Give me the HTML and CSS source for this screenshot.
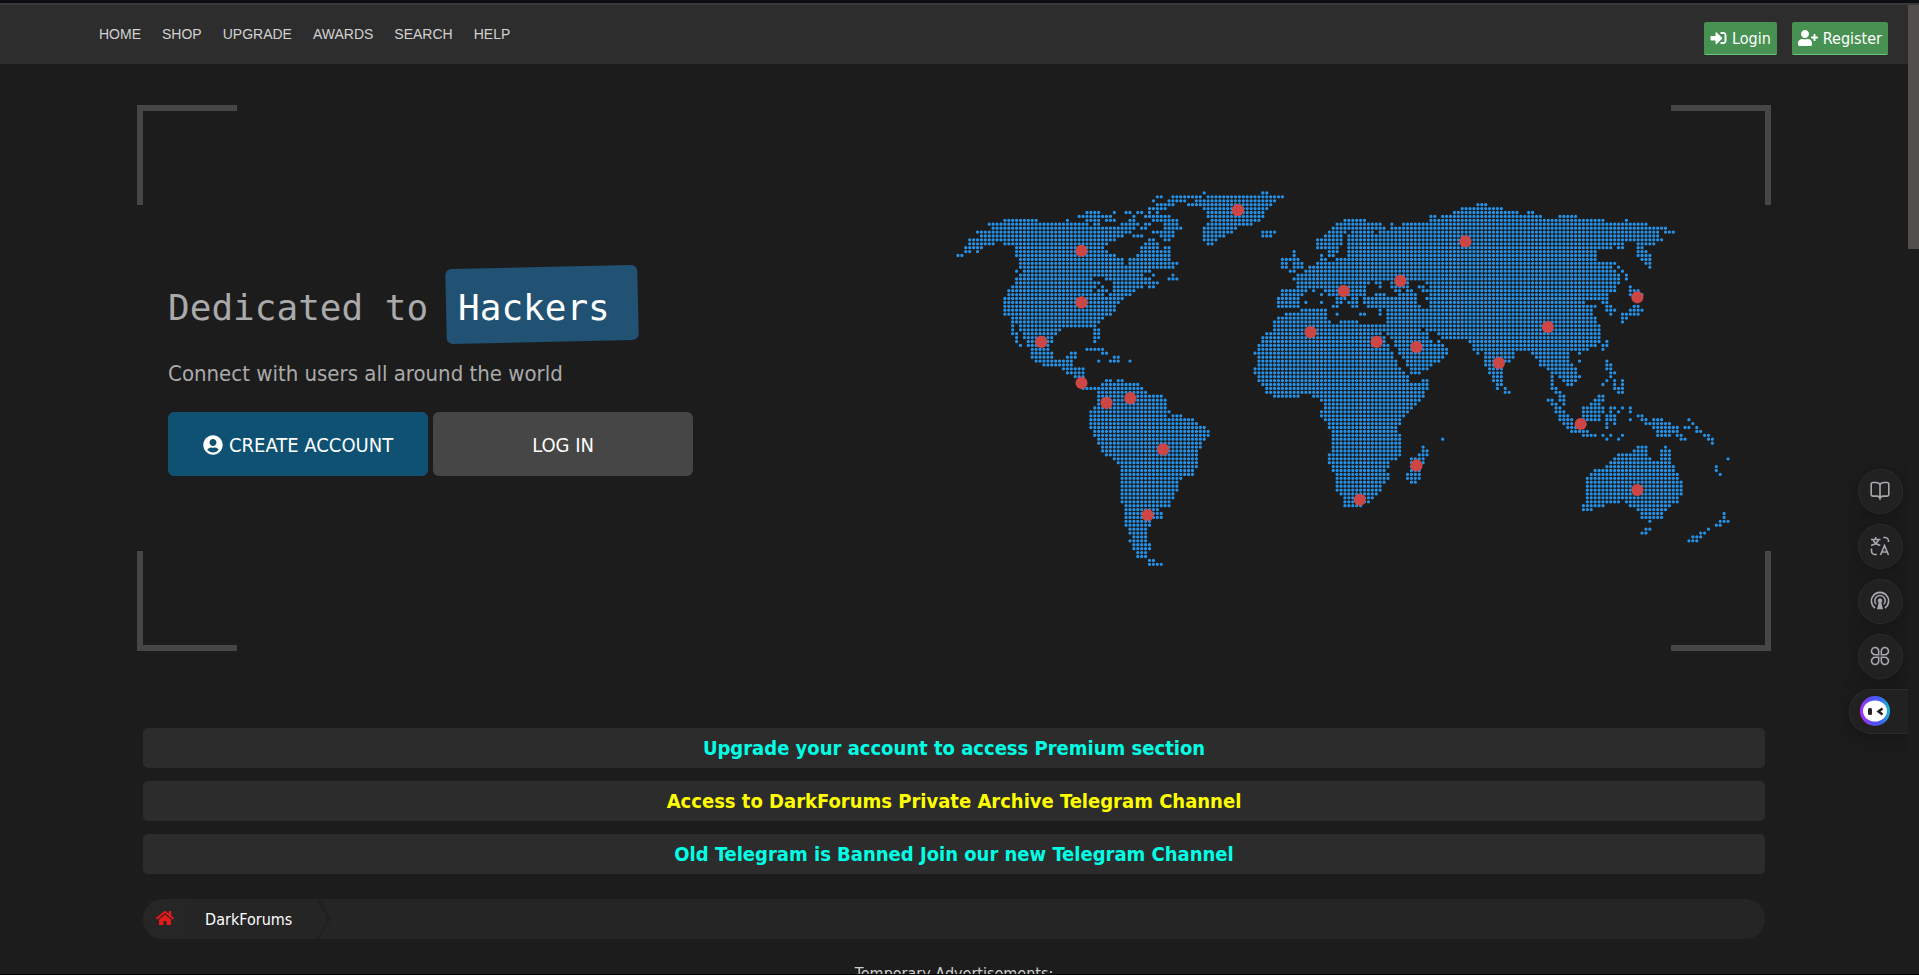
FILE: index.html
```html
<!DOCTYPE html>
<html lang="en">
<head>
<meta charset="utf-8">
<meta name="viewport" content="width=device-width, initial-scale=1">
<title>DarkForums</title>
<link rel="stylesheet" href="styles.css">
</head>
<body>
<div class="window-edge"></div>
<div class="viewport">
  <div class="page">
    <header class="topbar">
      <nav class="nav" aria-label="Main">
        <a href="#">HOME</a>
        <a href="#">SHOP</a>
        <a href="#">UPGRADE</a>
        <a href="#">AWARDS</a>
        <a href="#">SEARCH</a>
        <a href="#">HELP</a>
      </nav>
      <div class="account">
        <a class="account-btn" href="#">
          <svg class="icon" width="17" height="16" viewBox="0 0 512 512" aria-hidden="true"><path d="M416 448h-84c-6.600 0-12-5.400-12-12v-40c0-6.600 5.400-12 12-12h84c17.700 0 32-14.300 32-32V160c0-17.700-14.300-32-32-32h-84c-6.600 0-12-5.400-12-12V76c0-6.600 5.400-12 12-12h84c53 0 96 43 96 96v192c0 53-43 96-96 96zm-47-201L201 79c-15-15-41-4.500-41 17v96H24c-13.300 0-24 10.700-24 24v96c0 13.300 10.700 24 24 24h136v96c0 21.500 26 32 41 17l168-168c9.300-9.400 9.300-24.600 0-34z"/></svg>
          Login
        </a>
        <a class="account-btn" href="#">
          <svg class="icon" width="20" height="16" viewBox="0 0 640 512" aria-hidden="true"><path d="M624 208h-64v-64c0-8.800-7.200-16-16-16h-32c-8.800 0-16 7.200-16 16v64h-64c-8.800 0-16 7.200-16 16v32c0 8.800 7.200 16 16 16h64v64c0 8.800 7.200 16 16 16h32c8.800 0 16-7.200 16-16v-64h64c8.800 0 16-7.200 16-16v-32c0-8.800-7.200-16-16-16zm-400 48c70.700 0 128-57.300 128-128S294.700 0 224 0 96 57.300 96 128s57.300 128 128 128zm89.600 32h-16.700c-22.200 10.200-46.900 16-72.900 16s-50.600-5.800-72.900-16h-16.700C60.200 288 0 348.200 0 422.400V464c0 26.500 21.500 48 48 48h352c26.500 0 48-21.500 48-48v-41.600c0-74.200-60.200-134.400-134.400-134.400z"/></svg>
          Register
        </a>
      </div>
    </header>

    <main>
      <section class="hero">
        <div class="intro">
          <h1 class="title">Dedicated to <span class="tag"><span class="tag-text">Hackers</span></span></h1>
          <p class="lead">Connect with users all around the world</p>
          <div class="cta">
            <a class="cta-btn cta-primary" href="#">
              <svg class="icon" width="20" height="20" viewBox="0 0 496 512" aria-hidden="true"><path d="M248 8C111 8 0 119 0 256s111 248 248 248 248-111 248-248S385 8 248 8zm0 96c48.600 0 88 39.400 88 88s-39.400 88-88 88-88-39.400-88-88 39.400-88 88-88zm0 344c-58.700 0-111.300-26.600-146.500-68.200 18.800-35.400 55.600-59.800 98.500-59.800 2.400 0 4.800.4 7.100 1.100 13 4.200 26.600 6.900 40.900 6.900 14.300 0 28-2.700 40.900-6.900 2.300-.7 4.700-1.100 7.100-1.100 42.900 0 79.700 24.400 98.500 59.800C359.300 421.400 306.700 448 248 448z"/></svg>
              CREATE ACCOUNT
            </a>
            <a class="cta-btn" href="#">LOG IN</a>
          </div>
        </div>
        <svg class="map" viewBox="0 0 198 96" role="img" aria-label="World map">
          <path class="land" id="land"/>
          <g class="pins">
            <circle cx="72.1" cy="4.900" r="1.550"/>
            <circle cx="32.100" cy="15.300" r="1.550"/>
            <circle cx="32.100" cy="28.500" r="1.550"/>
            <circle cx="21.800" cy="38.600" r="1.550"/>
            <circle cx="32.100" cy="49.100" r="1.550"/>
            <circle cx="38.500" cy="54.200" r="1.550"/>
            <circle cx="44.600" cy="53" r="1.550"/>
            <circle cx="53" cy="66.100" r="1.550"/>
            <circle cx="49" cy="82.900" r="1.550"/>
            <circle cx="99.200" cy="25.600" r="1.550"/>
            <circle cx="113.700" cy="23" r="1.550"/>
            <circle cx="130.300" cy="12.900" r="1.550"/>
            <circle cx="90.700" cy="36.100" r="1.550"/>
            <circle cx="107.600" cy="38.600" r="1.550"/>
            <circle cx="117.800" cy="39.900" r="1.550"/>
            <circle cx="117.800" cy="70.200" r="1.550"/>
            <circle cx="103.300" cy="79" r="1.550"/>
            <circle cx="174.300" cy="27.200" r="1.550"/>
            <circle cx="151.400" cy="34.800" r="1.550"/>
            <circle cx="138.900" cy="44" r="1.550"/>
            <circle cx="159.800" cy="59.600" r="1.550"/>
            <circle cx="174.300" cy="76.500" r="1.550"/>
          </g>
        </svg>
        <span class="corner corner-tl"></span>
        <span class="corner corner-tr"></span>
        <span class="corner corner-bl"></span>
        <span class="corner corner-br"></span>
      </section>

      <div class="notices">
        <a class="notice" href="#">Upgrade your account to access Premium section</a>
        <a class="notice notice-yellow" href="#">Access to DarkForums Private Archive Telegram Channel</a>
        <a class="notice" href="#">Old Telegram is Banned Join our new Telegram Channel</a>
      </div>

      <nav class="crumbs" aria-label="Breadcrumb">
        <a class="crumb-home" href="#" aria-label="Home">
          <svg class="icon" width="18" height="16" viewBox="0 0 576 512" aria-hidden="true"><path d="M280.370 148.260L96 300.110V464a16 16 0 0 0 16 16l112.060-.29a16 16 0 0 0 15.920-16V368a16 16 0 0 1 16-16h64a16 16 0 0 1 16 16v95.640a16 16 0 0 0 16 16.050L464 480a16 16 0 0 0 16-16V300L295.670 148.260a12.190 12.190 0 0 0-15.300 0zM571.600 251.470L488 182.560V44.050a12 12 0 0 0-12-12h-56a12 12 0 0 0-12 12v72.610L318.470 43a48 48 0 0 0-61 0L4.340 251.470a12 12 0 0 0-1.600 16.900l25.500 31A12 12 0 0 0 45.150 301l235.220-193.740a12.190 12.190 0 0 1 15.300 0L530.900 301a12 12 0 0 0 16.900-1.600l25.500-31a12 12 0 0 0-1.700-16.930z"/></svg>
        </a>
        <a class="crumb" href="#">DarkForums</a>
        <svg class="crumb-arrow" width="16" height="40" viewBox="0 0 16 40" aria-hidden="true"><path d="M1 0l11 20L1 40"/></svg>
      </nav>

      <p class="ads">Temporary Advertisements:</p>
    </main>

    <aside class="tools" aria-label="Page tools">
      <button class="tool" type="button" aria-label="Read">
        <svg width="20" height="20" viewBox="0 0 20 20"><path d="M10 4v13.500M10 4C9.500 2.300 8 1.500 6 1.500H3A1.800 1.800 0 0 0 1.200 3.300v10A1.800 1.800 0 0 0 3 15.100h4c1.700 0 2.500.7 3 2.300.5-1.600 1.300-2.300 3-2.300h4a1.800 1.800 0 0 0 1.800-1.800v-10A1.800 1.800 0 0 0 17 1.500h-3c-2 0-3.500.8-4 2.500z"/></svg>
      </button>
      <button class="tool" type="button" aria-label="Translate">
        <svg width="20" height="20" viewBox="0 0 20 20"><path d="M1 3.500h9.500M5.700 1v2.500M3 3.500c.8 2.600 3.500 5 7.300 6M8.600 3.500C7.800 6.300 5 8.500 1 9.500M13.200 1.500h1.800a3.500 3.500 0 0 1 3.500 3.500v1M1.500 12.500V15A3.500 3.500 0 0 0 5 18.500h1.800M10.500 19l4-9.500 4 9.500M12 16h5"/></svg>
      </button>
      <button class="tool" type="button" aria-label="Listen">
        <svg width="20" height="20" viewBox="0 0 20 20"><path d="M5 17a8.600 8.600 0 1 1 10 0M6.300 13.300a5.200 5.200 0 1 1 7.400 0"/><path class="solid" d="M10 7.300a2.300 2.300 0 0 1 1.300 4.200l1.700 6.800H7l1.700-6.800A2.300 2.300 0 0 1 10 7.300z"/></svg>
      </button>
      <button class="tool" type="button" aria-label="Apps">
        <svg width="20" height="20" viewBox="0 0 20 20"><path d="M8.700 8.700H5.200a3.600 3.600 0 1 1 3.500-3.500zM11.300 8.700V5.200a3.600 3.600 0 1 1 3.500 3.500zM8.700 11.300v3.500a3.600 3.600 0 1 1-3.500-3.500zM11.300 11.300h3.500a3.600 3.600 0 1 1-3.500 3.500z"/></svg>
      </button>
      <button class="tool-dock" type="button" aria-label="Assistant">
        <svg width="30" height="30" viewBox="0 0 30 30">
          <defs><linearGradient id="ring" x1="0" y1=".7" x2="1" y2=".6"><stop offset="0" stop-color="#b02df0"/><stop offset=".4" stop-color="#5a4bf5"/><stop offset=".7" stop-color="#3f62f5"/><stop offset="1" stop-color="#18b8d8"/></linearGradient></defs>
          <circle cx="15" cy="15" r="15" fill="url(#ring)"/>
          <ellipse cx="15" cy="15" rx="12" ry="10.500" fill="#fff"/>
          <rect x="8" y="12" width="4" height="7" rx="1.500" fill="#222"/>
          <path d="M22.500 12.500l-4 3 4 3" fill="none" stroke="#222" stroke-width="2.500"/>
        </svg>
      </button>
    </aside>
  </div>
  <div class="scroll-track" aria-hidden="true"><div class="scroll-thumb"></div></div>
</div>
<script src="map.js"></script>
</body>
</html>
```
FILE: styles.css
```css
* {
  box-sizing: border-box;
}

body {
  margin: 0;
  height: 100vh;
  display: flex;
  flex-direction: column;
  overflow: hidden;
  background: #1c1c1c;
  border-bottom: 1px solid #000;
  color: #ccc;
  font-family: Tahoma, "DejaVu Sans Condensed", "Noto Sans", sans-serif;
  font-size: 16px;
}

a {
  color: inherit;
  text-decoration: none;
}

.icon {
  flex: none;
  fill: currentColor;
}

.window-edge {
  flex: none;
  height: 5px;
  background: #0d0e12;
  border-bottom: 2px solid #38393b;
}

.viewport {
  flex: 1;
  min-height: 0;
  display: flex;
}

.page {
  flex: 1;
  position: relative;
  overflow: hidden;
}

.scroll-track {
  width: 11px;
}

.scroll-thumb {
  height: 244px;
  background: #524e4d;
}

/* Header */

.topbar {
  display: flex;
  justify-content: space-between;
  align-items: center;
  height: 59px;
  padding: 0 20px 0 99px;
  background: #2d2d2d;
}

.nav {
  display: flex;
  gap: 21px;
  padding-bottom: 2px;
  font: 14px/18px Arial, "Liberation Sans", sans-serif;
  color: #d2d2d2;
}

.account {
  display: flex;
  gap: 15px;
  padding-top: 8px;
}

.account-btn {
  display: flex;
  align-items: center;
  gap: 5px;
  height: 33px;
  padding: 0 6px;
  border-bottom: 1px solid #68c878;
  border-radius: 2px;
  background: #479152;
  color: #fff;
}

/* Hero */

.hero {
  position: relative;
  display: flex;
  align-items: center;
  justify-content: space-between;
  width: calc(85% + 12px);
  min-height: 546px;
  margin: 41px auto 77px;
  padding: 1px 41px 0 31px;
}

.corner {
  position: absolute;
  width: 100px;
  height: 100px;
  border: 0 solid #464646;
}

.corner-tl {
  top: 0;
  left: 0;
  border-width: 6px 0 0 6px;
}

.corner-tr {
  top: 0;
  right: 0;
  border-width: 6px 6px 0 0;
}

.corner-bl {
  bottom: 0;
  left: 0;
  border-width: 0 0 6px 6px;
}

.corner-br {
  right: 0;
  bottom: 0;
  border-width: 0 6px 6px 0;
}

.intro {
  flex: none;
  padding-bottom: 14px;
  color: #aaa;
}

.title {
  display: flex;
  align-items: baseline;
  gap: 18px;
  margin: 0 0 18px;
  font: 400 36px/69px Consolas, "DejaVu Sans Mono", monospace;
}

.tag {
  padding: 6px 28px 0 12px;
  border-radius: 6px;
  background: #215273;
  color: #fff;
  transform: rotate(-1.3deg);
}

.tag-text {
  display: block;
  transform: rotate(1.3deg);
}

.lead {
  margin: 0 0 24px;
  font-size: 22px;
  line-height: 28px;
}

.cta {
  display: flex;
  gap: 5px;
}

.cta-btn {
  display: flex;
  align-items: center;
  justify-content: center;
  gap: 6px;
  width: 260px;
  height: 64px;
  padding-top: 1px;
  border-radius: 6px;
  background: #464646;
  color: #fff;
  font-size: 20px;
}

.cta-primary {
  background: #0f5173;
}

.map {
  width: 774px;
  min-width: 0;
}

.land {
  fill: none;
  stroke: #2492e8;
  stroke-width: .84;
  stroke-linecap: round;
}

.pins {
  fill: #cc4646;
}

/* Notices */

.notices {
  display: grid;
  gap: 13px;
  width: 85%;
  margin: 0 auto;
}

.notice {
  border-radius: 5px;
  background: #2c2c2c;
  color: #00ffe5;
  font-size: 20px;
  font-weight: 700;
  line-height: 40px;
  text-align: center;
}

.notice-yellow {
  color: #ff0;
}

/* Breadcrumb */

.crumbs {
  display: flex;
  align-items: center;
  width: 85%;
  height: 40px;
  margin: 25px auto 23px;
  border-radius: 20px;
  background: #252525;
  overflow: hidden;
}

.crumb-home {
  display: flex;
  align-items: center;
  height: 40px;
  padding: 0 12px 2px 13px;
  background: #262626;
  color: #e41919;
}

.crumb {
  padding: 0 25px 0 19px;
  color: #fff;
}

.crumb-arrow {
  fill: none;
  stroke: #212121;
  stroke-width: 3;
}

.ads {
  margin: 0;
  line-height: 24px;
  text-align: center;
}

/* Floating tools */

.tools {
  position: absolute;
  top: 464px;
  right: 0;
  display: flex;
  flex-direction: column;
  align-items: flex-end;
  gap: 10px;
}

.tool,
.tool-dock {
  display: flex;
  align-items: center;
  height: 45px;
  padding: 0 2px 2px 0;
  border: 1px solid #2b2b2b;
  background: #212121;
  box-shadow: 0 4px 20px rgba(0, 0, 0, .25);
}

.tool {
  justify-content: center;
  width: 45px;
  margin-right: 5px;
  border-radius: 50%;
}

.tool svg {
  fill: none;
  stroke: #a9a7ae;
  stroke-width: 1.6;
}

.tool .solid {
  fill: #a9a7ae;
  stroke: none;
}

.tool-dock {
  width: 59px;
  padding-left: 10px;
  border-right: 0;
  border-radius: 22px 0 0 22px;
}
```
FILE: map.js
```js
// Land cells of the dotted world map: one entry per row, columns as "from-to" runs.
const rows = [
  "63 78-79",
  "51-52 55-62 64-83",
  "50 54-58 61-81",
  "51-55 59-80 133-135",
  "49-53 63-79 129-139",
  "33-36 40 43-44 46-47 49 51 64-78 127-143 146-147",
  "31-39 45 48-54 64-78 121-122 124-149 154-158",
  "12-20 28 33-36 38-40 44-45 50-56 65-77 99-104 121-165 171",
  "8-33 35-36 42-46 48-49 53-56 64-75 97-108 111 114-176",
  "9-45 47-48 53-57 63-71 96-109 111-181",
  "5-44 50-55 63-70 78-81 95-99 101-106 108-179 181-183",
  "6-42 45-47 52-55 63-68 78-80 94-98 100-179",
  "3-40 49-50 53-54 63-66 92-98 100-180",
  "3-9 12-38 48-51 64-65 92-98 100-170 174-178",
  "2-6 15-37 47-51 53-54 92-97 100-167 169-170 174-175",
  "2-3 5 15-38 47-54 86 95-97 100-163 174-176",
  "0-1 15-40 46-54 86 93 95-96 100-163 174-177",
  "16-42 44-54 83-87 93-94 97-163 175-177",
  "16-42 44-56 83-84 86-88 92-168 176-177",
  "16-55 83-84 86-88 90-167 169 177",
  "15 17-49 85-86 89-168 170",
  "16-47 50 55 87-169 171",
  "15-34 38-49 54-56 86-169 171",
  "15-36 40-51 87-105 107-108 111-115 120-169",
  "14-35 37 40-47 49-50 87-104 108 111-115 118-119 121-168 172",
  "13-34 36-38 40-45 83-89 91 94-104 112-113 115-116 119-168 172-174",
  "13-37 39-44 83-88 93 95-104 107-109 113-117 121-166 172-175",
  "12-42 82-87 97-99 101-102 104-117 120-166",
  "12-41 82-87 89 93 97-98 100-102 104-117 121-160 165-166",
  "12-40 82-87 96-97 101-102 105-118 121-163 166-167 173-174",
  "12-40 88-94 108 110-162 166-168 172-175",
  "12-39 84-94 97 103-104 108 110-162 167 170-174",
  "14-37 82-94 110-163 170-171",
  "14-36 81-95 98-102 110-163 170",
  "14 16-35 81-164",
  "14 16-26 35-36 81-118 120-164",
  "14-15 17-25 35-36 79-108 110-120 123-164",
  "15 17-24 35-36 78-109 111-120 124-164",
  "15 18-24 35 78-109 112-121 123 131-164 166",
  "16 18-23 77-110 112-124 132-163 165-166",
  "19-23 33-37 77-110 113-125 132-161 165",
  "19-24 29-30 37-38 76-111 113-125 133 135-142 147-156 159",
  "19-24 28-30 40-41 77-111 114-124 135-142 148-156",
  "20-29 36 39-41 44 77-112 115-123 135-141 149-156 159 166",
  "22-29 77-112 115-121 135-139 149-157 166-167",
  "27-32 76-113 116-120 136-139 151-158 166-167",
  "28-32 76-114 116-118 136-139 152-158 167-168",
  "30-32 77-115 137-139 152 154-159 167",
  "32 38-39 41-42 77-115 119-120 137-139 152 155-158 166 168 170",
  "31-32 37-46 78-120 138-139 152 156-157 165 168 170",
  "32-47 79-120 138 140 152-153 168-170",
  "36-48 79-119 140-141 153-154 169-170",
  "36-52 81-87 91-119 154-155 164-165",
  "36-53 93-118 151-152 154-155 163-165",
  "36-53 94-117 152-153 155 162-164",
  "35-53 94-116 153-154 160-165 167-168 170 172",
  "34-54 93-115 153-155 160-165 167 169 172",
  "34-53 55-57 93-114 154-156 160-164 166-168 174-175",
  "34-60 94-113 154-157 160-164 166-168 172 175-176 178-180 187",
  "34-61 95-113 155-157 166 168 176-182 188",
  "34-63 95-112 156-158 166 178-184 186-187 189",
  "35-64 96-112 157-161 179-184 189-190",
  "35-64 96-113 160-163 165 167 170 179-182 184-185 191-192",
  "36-63 96-113 124 166 169 185-186 192-193",
  "36-62 96-113 193",
  "37-62 96-113 119 174-176 181",
  "37-61 96-113 119-120 173-176 180-182",
  "38-61 95-113 118-120 169-176 180-182",
  "40-61 95-112 116-119 168-177 180-182 197",
  "41-61 95-110 116-119 167-182",
  "42-61 96-110 116-118 166-183 194",
  "42-60 96-109 116-118 163-183 194",
  "42-60 97-110 115-118 162-184 195",
  "42-57 97-110 115-118 161-184",
  "42-56 97-109 116-117 161-185",
  "42-56 97-108 161-185",
  "42-56 97-108 161-185",
  "42-55 98-107 161-185",
  "42-55 99-106 161-184",
  "42-54 99-105 161-169 171-184",
  "43-54 99-103 160-165 172-182",
  "43-51 160-162 174-181",
  "43-52 175-180 196",
  "43-52 175-180 196",
  "43-49 177 195-197",
  "43-49 194-195",
  "44-48 176-177 192",
  "44-48 175-176 190-191",
  "45-48 188-190",
  "44-48 187-189",
  "45-49",
  "45-49",
  "46-48",
  "46-48",
  "49-50",
  "49-52"
];

let d = "";
rows.forEach((row, y) => {
  row.split(" ").forEach((run) => {
    const [from, to = from] = run.split("-").map(Number);
    for (let x = from; x <= to; x++) d += `M${x + 0.5} ${y + 0.5}h0`;
  });
});
document.getElementById("land").setAttribute("d", d);
```
